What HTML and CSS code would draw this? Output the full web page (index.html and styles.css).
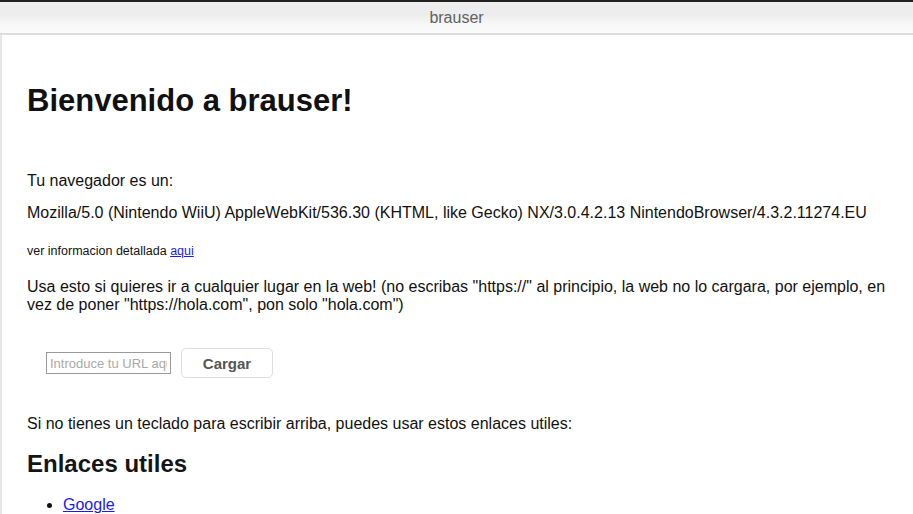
FILE: index.html
```html
<!DOCTYPE html>
<html lang="es">
<head>
<meta charset="utf-8">
<title>brauser</title>
<link rel="stylesheet" href="styles.css">
</head>
<body>
<header class="topbar"><span class="topbar-title">brauser</span></header>
<main class="page">
  <h1 class="title">Bienvenido a brauser!</h1>
  <p class="text intro">Tu navegador es un:</p>
  <p class="text ua">Mozilla/5.0 (Nintendo WiiU) AppleWebKit/536.30 (KHTML, like Gecko) NX/3.0.4.2.13 NintendoBrowser/4.3.2.11274.EU</p>
  <p class="small">ver informacion detallada <a href="#" class="link">aqui</a></p>
  <p class="text usage">Usa esto si quieres ir a cualquier lugar en la web! (no escribas "https://" al principio, la web no lo cargara, por ejemplo, en vez de poner "https://hola.com", pon solo "hola.com")</p>
  <form class="url-form">
    <input class="url-input" type="text" placeholder="Introduce tu URL aquí">
    <button class="load-btn" type="button">Cargar</button>
  </form>
  <p class="text nokbd">Si no tienes un teclado para escribir arriba, puedes usar estos enlaces utiles:</p>
  <h2 class="subtitle">Enlaces utiles</h2>
  <ul class="links">
    <li><a href="#" class="link">Google</a></li>
  </ul>
</main>
</body>
</html>
```

FILE: styles.css
```css
html, body {
  margin: 0;
  padding: 0;
  background: #ffffff;
  height: 100%;
  overflow: hidden;
}
body {
  font-family: "Liberation Sans", Arial, sans-serif;
  color: #111;
  border-top: 2px solid #222;
}
.topbar {
  height: 31px;
  background: linear-gradient(to bottom, #eeeeee 0%, #ececec 40%, #f7f7f7 70%, #fbfbfb 100%);
  border-bottom: 2px solid #dcdcdc;
  display: flex;
  align-items: center;
  justify-content: center;
}
.topbar-title {
  font-size: 16px;
  color: #616161;
}
.page {
  border-left: 2px solid #e6e6e6;
  padding: 0 24px 0 25px;
  height: 100%;
}
.title {
  margin: 0;
  padding-top: 48px;
  font-size: 31px;
  line-height: 36px;
  font-weight: bold;
  color: #111;
}
.text {
  font-size: 16px;
  line-height: 18px;
  margin: 0;
}
.intro { margin-top: 53px; }
.ua { margin-top: 14px; }
.small {
  font-size: 12.5px;
  margin: 22px 0 0;
  line-height: 14px;
}
.link { color: #1a1aee; }
.usage { margin-top: 20px; }
.url-form {
  display: flex;
  align-items: center;
  gap: 10px;
  margin: 34px 0 0 19px;
}
.url-input {
  box-sizing: border-box;
  width: 125px;
  height: 22px;
  padding: 0 3px;
  border: 1px solid #9a9a9a;
  font-family: "Liberation Sans", Arial, sans-serif;
  font-size: 13px;
  margin: 0;
}
.url-input::placeholder { color: #a8a8a8; }
.load-btn {
  box-sizing: border-box;
  width: 92px;
  height: 30px;
  border: 1px solid #dedede;
  border-radius: 5px;
  background: #fff;
  color: #555;
  font-family: "Liberation Sans", Arial, sans-serif;
  font-size: 15px;
  font-weight: bold;
  margin: 0;
}
.nokbd { margin-top: 37px; }
.subtitle {
  margin: 17px 0 0;
  font-size: 24px;
  line-height: 28px;
  font-weight: bold;
  color: #151515;
}
.links {
  margin: 18px 0 0;
  padding-left: 36px;
  font-size: 16px;
  line-height: 18px;
}
```
